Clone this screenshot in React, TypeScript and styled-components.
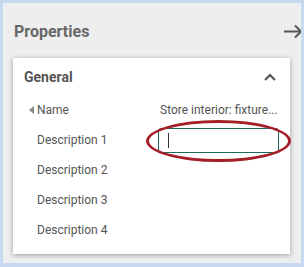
import React from "react";
import styled, { createGlobalStyle } from "styled-components";

const Global = createGlobalStyle`
  html, body { margin: 0; padding: 0; background: #c6d9f1; }
  body { font-family: Roboto, "Liberation Sans", sans-serif; }
`;

const Frame = styled.div`
  width: 304px;
  height: 267px;
  box-sizing: border-box;
  padding: 3px 3px 4px 3px;
  background: #c6d9f1;
`;

const Panel = styled.div`
  height: 100%;
  background: #eeeeee;
  overflow: hidden;
  display: flex;
  flex-direction: column;
  padding: 0 11px 9px 10px;
  box-sizing: border-box;
`;

const Header = styled.div`
  height: 55px;
  display: flex;
  align-items: center;
  justify-content: space-between;
  padding-top: 1px;
  box-sizing: border-box;
`;

const Title = styled.h1`
  margin: 0 0 0 1px;
  font-size: 16px;
  font-weight: 700;
  color: #676767;
`;

const ArrowSlot = styled.div`
  width: 20px;
  height: 20px;
  margin-right: -13px;
  display: flex;
`;

const Card = styled.div`
  flex: 1;
  background: #ffffff;
  box-shadow: 0 1px 5px rgba(0, 0, 0, 0.35);
  display: flex;
  flex-direction: column;
  padding: 8px 11px 9px 15px;
  box-sizing: border-box;
`;

const SectionHead = styled.div`
  height: 22px;
  display: flex;
  align-items: center;
  justify-content: space-between;
  margin-bottom: 7px;
`;

const SectionTitle = styled.span`
  margin-left: -4px;
  font-size: 14px;
  font-weight: 700;
  color: #555555;
`;

const Chevron = styled.svg`
  width: 12px;
  height: 8px;
  margin-right: 3px;
`;

const Row = styled.div`
  height: 30px;
  display: grid;
  grid-template-columns: 130px 121px;
  align-items: center;
`;

const Label = styled.div`
  display: flex;
  align-items: center;
  font-size: 12px;
  color: #555555;
`;

const Marker = styled.span<{ $show: boolean }>`
  width: 9px;
  display: inline-flex;
  align-items: center;
  &::before {
    content: "";
    display: ${(p) => (p.$show ? "block" : "none")};
    width: 0;
    height: 0;
    border-top: 4px solid transparent;
    border-bottom: 4px solid transparent;
    border-right: 5px solid #8a8a8a;
    margin-left: 1px;
  }
`;

const Value = styled.div`
  font-size: 12px;
  color: #555555;
  padding-left: 2px;
  white-space: nowrap;
  overflow: hidden;
`;

const InputCell = styled.div`
  position: relative;
  height: 25px;
`;

const InputBox = styled.div`
  height: 25px;
  box-sizing: border-box;
  border: 1px solid #1e6b5b;
  border-radius: 3px;
  display: flex;
  align-items: center;
  padding-left: 9px;
`;

const Caret = styled.span`
  width: 1px;
  height: 15px;
  background: #333333;
`;

const Highlight = styled.div`
  position: absolute;
  left: -12px;
  top: -8px;
  width: 145px;
  height: 42px;
  box-sizing: border-box;
  border: 3.5px solid #a41e28;
  border-radius: 50%;
  pointer-events: none;
`;

const rows = [
  { label: "Name", marker: true, value: "Store interior: fixture..." },
  { label: "Description 1", input: true },
  { label: "Description 2" },
  { label: "Description 3" },
  { label: "Description 4" },
];

export default function App() {
  return (
    <>
      <Global />
      <Frame>
        <Panel>
          <Header>
            <Title>Properties</Title>
            <ArrowSlot>
              <svg width="20" height="20" viewBox="0 0 20 20" fill="none">
                <path d="M1 10.5H18" stroke="#555" strokeWidth="2" />
                <path d="M12 4.5L18 10.5L12 16.5" stroke="#555" strokeWidth="2" fill="none" />
              </svg>
            </ArrowSlot>
          </Header>
          <Card>
            <SectionHead>
              <SectionTitle>General</SectionTitle>
              <Chevron viewBox="0 0 12 8" fill="none">
                <path d="M1 7L6 2L11 7" stroke="#555" strokeWidth="2.2" />
              </Chevron>
            </SectionHead>
            {rows.map((r) => (
              <Row key={r.label}>
                <Label>
                  <Marker $show={!!r.marker} />
                  {r.label}
                </Label>
                {r.value ? <Value>{r.value}</Value> : null}
                {r.input ? (
                  <InputCell>
                    <InputBox>
                      <Caret />
                    </InputBox>
                    <Highlight />
                  </InputCell>
                ) : null}
              </Row>
            ))}
          </Card>
        </Panel>
      </Frame>
    </>
  );
}
